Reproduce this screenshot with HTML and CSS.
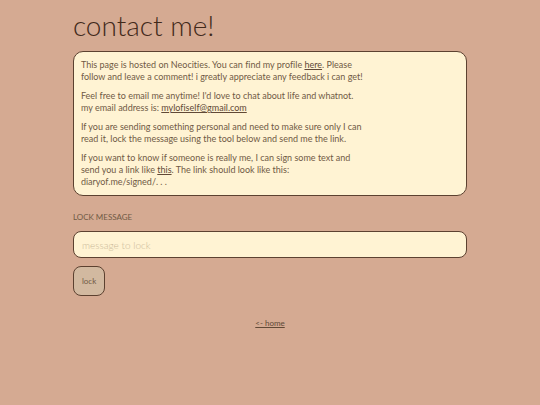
FILE: index.html
```html
<!DOCTYPE html>
<html lang="en">
<head>
<meta charset="utf-8">
<meta name="viewport" content="width=device-width, initial-scale=1">
<title>contact me!</title>
<link rel="stylesheet" href="styles.css">
</head>
<body>
<main class="page">
  <h1 class="title">contact me!</h1>
  <section class="card">
    <p>This page is hosted on Neocities. You can find my profile <a href="#">here</a>. Please<br>follow and leave a comment! i greatly appreciate any feedback i can get!</p>
    <p>Feel free to email me anytime! I'd love to chat about life and whatnot.<br>my email address is: <a href="mailto:mylofiself@gmail.com">mylofiself@gmail.com</a></p>
    <p>If you are sending something personal and need to make sure only I can<br>read it, lock the message using the tool below and send me the link.</p>
    <p>If you want to know if someone is really me, I can sign some text and<br>send you a link like <a href="#">this</a>. The link should look like this:<br>diaryof.me/signed/. . .</p>
  </section>
  <form class="lock">
    <label class="label" for="message">LOCK MESSAGE</label>
    <input class="field" id="message" type="text" placeholder="message to lock">
    <button class="button" type="button">lock</button>
  </form>
  <nav class="footer"><a href="#">&lt;- home</a></nav>
</main>
</body>
</html>
```
FILE: styles.css
```css
* {
  box-sizing: border-box;
}

body {
  margin: 0;
  background: #d5aa92;
  color: #705a45;
  font-family: "Coming Soon", Lato, "Open Sans", sans-serif;
  font-size: 9px;
  font-weight: 400;
  font-variant-ligatures: none;
  line-height: 12px;
}

a {
  color: #614936;
  text-underline-offset: 1px;
}

.page {
  width: 73%;
  margin: 0 auto;
  padding: 7px 0;
}

.title {
  margin: 0 0 8px;
  color: #42291a;
  font-size: 28px;
  font-weight: 300;
  line-height: 36px;
}

.card {
  display: flex;
  flex-direction: column;
  gap: 7px;
  padding: 7px;
  border: 1px solid #5c4130;
  border-radius: 10px;
  background: #fff3d3;
}

.card p {
  margin: 0;
}

.lock {
  display: flex;
  flex-direction: column;
  align-items: flex-start;
  gap: 8px;
  margin-top: 15px;
}

.label {
  font-size: 8px;
}

.field {
  width: 100%;
  height: 27px;
  padding: 0 8px;
  border: 1px solid #5c4130;
  border-radius: 8px;
  background: #fff3d3;
  color: inherit;
  font: inherit;
  font-size: 10px;
  font-weight: 300;
}

.field::placeholder {
  color: #cbb998;
  opacity: 1;
}

.button {
  padding: 8px;
  min-height: 30px;
  border: 1px solid #5c4130;
  border-radius: 8px;
  background: #d2b9a0;
  color: inherit;
  font: inherit;
  font-size: 8px;
}

.footer {
  margin-top: 21px;
  font-size: 8px;
  text-align: center;
}
```
